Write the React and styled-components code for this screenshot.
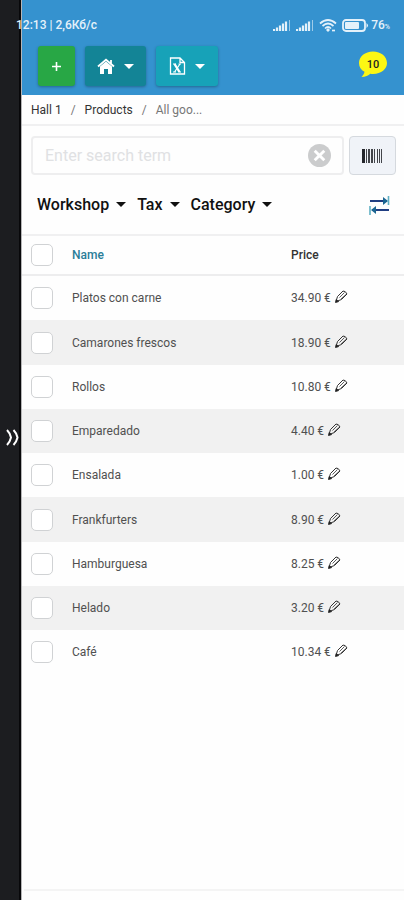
import React from "react";
import styled, { createGlobalStyle } from "styled-components";

const products = [
  { name: "Platos con carne", price: "34.90 €" },
  { name: "Camarones frescos", price: "18.90 €" },
  { name: "Rollos", price: "10.80 €" },
  { name: "Emparedado", price: "4.40 €" },
  { name: "Ensalada", price: "1.00 €" },
  { name: "Frankfurters", price: "8.90 €" },
  { name: "Hamburguesa", price: "8.25 €" },
  { name: "Helado", price: "3.20 €" },
  { name: "Café", price: "10.34 €" },
];

const GlobalStyle = createGlobalStyle`
  *, *::before, *::after { box-sizing: border-box; }
  body { margin: 0; background: #fefefe; font-family: Roboto, "Liberation Sans", sans-serif; color: #222; }
  button, input { font-family: inherit; }
  svg { display: block; flex: none; }
`;

const Page = styled.div`
  position: relative;
  display: flex;
  min-height: 100vh;
`;

const Rail = styled.aside`
  flex: 0 0 21px;
  display: flex;
  justify-content: center;
  background: #1c1d20;
  border-right: 2px solid #08080a;
`;

const RailToggle = styled.button`
  display: flex;
  align-items: center;
  justify-content: flex-end;
  width: 18px;
  height: 24px;
  margin-top: 425px;
  padding: 0;
  border: 0;
  background: none;
  color: #fff;
`;

const Main = styled.main`
  flex: 1;
  min-width: 0;
  display: flex;
  flex-direction: column;
  border-left: 1px solid #b5b5b6;
`;

const StatusBar = styled.div`
  position: absolute;
  top: 15px;
  left: 16px;
  right: 14px;
  display: flex;
  justify-content: space-between;
  align-items: center;
  height: 20px;
  font-size: 12px;
  font-weight: 500;
  color: #e4f1fa;
`;

const StatusIcons = styled.div`
  display: flex;
  align-items: center;
  gap: 5px;
`;

const Charge = styled.span`
  margin-left: -3px;
  small { font-size: 7px; }
`;

const Header = styled.header`
  display: flex;
  align-items: flex-start;
  gap: 10px;
  height: 95px;
  padding: 46px 16px 0;
  background: #3592cf;
`;

const HeaderButton = styled.button`
  display: flex;
  align-items: center;
  justify-content: center;
  gap: 9px;
  width: ${(p) => p.$width};
  height: 40px;
  padding: 0;
  border: 0;
  border-radius: 3px;
  background: ${(p) => p.$color};
  box-shadow: 0 1px 3px rgba(0, 0, 0, 0.3);
  color: #fff;
  font-size: 16px;
`;

const Messages = styled.button`
  display: grid;
  place-items: center;
  width: 30px;
  height: 30px;
  margin: 3px 0 0 auto;
  padding: 0;
  border: 0;
  background: none;
  color: #222;
  > * { grid-area: 1 / 1; }
`;

const MessageCount = styled.span`
  font-size: 11px;
  font-weight: 500;
`;

const Breadcrumbs = styled.nav`
  display: flex;
  align-items: center;
  gap: 9px;
  height: 31px;
  padding: 0 9px;
  border-bottom: 2px solid #f0f0f1;
  font-size: 12px;
  color: #777;
`;

const Crumb = styled.a`
  color: #333;
  text-decoration: none;
`;

const SearchRow = styled.form`
  display: flex;
  gap: 5px;
  padding: 10px 8px 0 9px;
`;

const SearchBox = styled.div`
  flex: 1;
  min-width: 0;
  display: flex;
  align-items: center;
  height: 39px;
  padding: 0 11px 0 12px;
  border: 2px solid #eeeeef;
  border-radius: 4px;
`;

const SearchInput = styled.input`
  flex: 1;
  min-width: 0;
  padding: 0;
  border: 0;
  outline: 0;
  background: none;
  color: #222;
  font-size: 16px;
  &::placeholder { color: #e0e1e3; opacity: 1; }
`;

const IconButton = styled.button`
  display: flex;
  align-items: center;
  justify-content: center;
  padding: 0;
  border: 0;
  background: none;
  color: inherit;
`;

const ScanButton = styled(IconButton)`
  width: 47px;
  height: 39px;
  border: 1px solid #d5d9de;
  border-radius: 4px;
  background: #f0f3f8;
`;

const Filters = styled.div`
  display: flex;
  align-items: center;
  gap: 11px;
  height: 59px;
  padding: 0 14px 0 15px;
`;

const Filter = styled.button`
  display: flex;
  align-items: center;
  gap: 7px;
  padding: 0;
  border: 0;
  background: none;
  color: #111;
  font-size: 16px;
  font-weight: 500;
`;

const Sort = styled(IconButton)`
  margin-left: auto;
`;

const Table = styled.table`
  width: 100%;
  table-layout: fixed;
  border-collapse: separate;
  border-spacing: 0;
  font-size: 12px;
`;

const CheckCol = styled.col`
  width: 50px;
`;

const PriceCol = styled.col`
  width: 113px;
`;

const HeadCell = styled.th`
  height: 42px;
  padding: 0 0 0 ${(p) => (p.$check ? "9px" : "0")};
  border-top: 2px solid #f0f0f1;
  border-bottom: 2px solid #ededee;
  text-align: left;
  font-weight: 500;
  color: ${(p) => (p.$active ? "#2a7d98" : "#333")};
`;

const Row = styled.tr`
  height: 44px;
  &:nth-child(even) { background: #f1f1f1; }
  &:nth-child(4n + 2) { height: 45px; }
`;

const Cell = styled.td`
  padding: 0 0 0 ${(p) => (p.$check ? "9px" : "0")};
  color: #505050;
`;

const Checkbox = styled.input.attrs({ type: "checkbox" })`
  appearance: none;
  display: block;
  width: 22px;
  height: 22px;
  margin: 0;
  border: 1px solid #d0d2d4;
  border-radius: 5px;
  background: #fff;
  &:checked { background: #2a7d98; }
`;

const Price = styled.div`
  display: flex;
  align-items: center;
  gap: 4px;
`;

const EditButton = styled(IconButton)`
  padding-bottom: 3px;
`;

const Footer = styled.footer`
  height: 11px;
  margin: auto 0 0 2px;
  border-top: 2px solid #f4f4f4;
`;

const Caret = () => (
  <svg width="10" height="5" viewBox="0 0 10 5" fill="currentColor" aria-hidden="true">
    <path d="M0 0h10L5 5z" />
  </svg>
);

const Plus = () => (
  <svg width="9" height="9" viewBox="0 0 9 9" stroke="currentColor" strokeWidth="1.600" aria-hidden="true">
    <path d="M4.500 0v9M0 4.500h9" />
  </svg>
);

const Signal = () => (
  <svg width="18" height="12" viewBox="0 0 18 12" stroke="currentColor" strokeWidth="2.200" aria-hidden="true">
    <path d="M1 12V10M4 12V8.500M7 12V6.500M10 12V4.500M13 12V2.500" />
    <path d="M16.500 12V1" strokeWidth="1" opacity=".6" />
  </svg>
);

const Wifi = () => (
  <svg width="18" height="14" viewBox="0 0 18 14" fill="none" stroke="currentColor" strokeWidth="1.700" aria-hidden="true">
    <path d="M1 5.500Q9-1.500 17 5.500M3.500 8Q9 3 14.500 8M6 10.500Q9 7.500 12 10.500" />
    <path d="M9 10l2 2-2 2-2-2z" fill="currentColor" stroke="none" />
    <path d="M13 12.500h3" />
  </svg>
);

const Battery = () => (
  <svg width="27" height="13" viewBox="0 0 27 13" aria-hidden="true">
    <rect x="1" y="1" width="22" height="11" rx="3" fill="none" stroke="currentColor" strokeWidth="1.800" />
    <rect x="3" y="3" width="14" height="7" rx="1" fill="currentColor" />
    <path d="M24.500 4q3 2.500 0 5z" fill="currentColor" />
  </svg>
);

const Home = () => (
  <svg width="18" height="17" viewBox="0 0 18 17" aria-hidden="true">
    <path d="M3 8.500L9 3.500l6 5V16h-4v-5H7v5H3z" fill="currentColor" />
    <path d="M1 8.500L9 1.700l8 6.800M14 2v4" fill="none" stroke="currentColor" strokeWidth="1.800" />
  </svg>
);

const Excel = () => (
  <svg width="17" height="18" viewBox="0 0 17 18" fill="none" stroke="currentColor" aria-hidden="true">
    <path d="M1.500 1h9.500l4.500 4.500V17h-14zM11 1v4.500h4.500" strokeWidth="1.300" />
    <path d="M5.500 7l5 8" strokeWidth="2.300" />
    <path d="M11 7l-5.500 8M4 7h3M9.500 7h2.500M4 15h3M9.500 15h2.500" strokeWidth="1.200" />
  </svg>
);

const Bubble = () => (
  <svg width="30" height="30" viewBox="0 0 30 30" fill="#fcf714" aria-hidden="true">
    <path d="M15 2.500C7 2.500 1 7.500 1 14c0 4 2 7 5.500 8.700-.3 2-1.500 3.600-3 5.300 4-.2 7-1.700 8.800-3.300C22 26 29 20.500 29 14 29 7.500 23 2.500 15 2.500z" />
  </svg>
);

const Clear = () => (
  <svg width="23" height="23" viewBox="0 0 24 24" aria-hidden="true">
    <circle cx="12" cy="12" r="12" fill="#cbcccd" />
    <path d="M7 7l10 10M17 7L7 17" stroke="#fff" strokeWidth="3" />
  </svg>
);

const Barcode = () => (
  <svg width="21" height="14" viewBox="0 0 21 14" fill="#24262b" aria-hidden="true">
    <path d="M0 0h3v14H0z" />
    <path d="M4 0h1v14H4zM6 0h2v14H6zM9 0h2v14H9zM12 0h1v14h-1zM15 0h1v14h-1zM17 0h1v14h-1zM19 0h1v14h-1z" opacity=".85" />
  </svg>
);

const Swap = () => (
  <svg width="21" height="20" viewBox="0 0 21 20" fill="none" aria-hidden="true">
    <path d="M1 6h17M3 15h17" stroke="#203e82" strokeWidth="2" />
    <path d="M19.500 1v9M1 11v9" stroke="#5fb0c4" strokeWidth="1.600" />
    <path d="M14 2l5 4-5 4zM7 11l-5 4 5 4z" fill="#1b6692" />
  </svg>
);

const Pencil = () => (
  <svg width="13" height="13" viewBox="0 0 13 13" fill="none" stroke="#333" aria-hidden="true">
    <path d="M1 11.500l1.500-5L8 1q2.500-.2 4 3L6.500 9.500z" strokeWidth="1" />
    <path d="M4.500 7.500l5-5M6 9L11 4.500" strokeWidth=".8" />
    <path d="M.5 12.500l.8-3.200 2.300 2.300z" fill="#111" />
  </svg>
);

const Chevrons = () => (
  <svg width="13" height="17" viewBox="0 0 13 17" fill="none" stroke="currentColor" strokeWidth="2" aria-hidden="true">
    <path d="M1 1q3 3 4 7.500Q4 13 1 16M7.500 1q3 3 4 7.500-1 4.500-4 7.500" />
  </svg>
);

export default function App() {
  return (
    <>
      <GlobalStyle />
      <Page>
        <Rail>
          <RailToggle type="button" aria-label="Open menu"><Chevrons /></RailToggle>
        </Rail>
        <Main>
          <Header>
            <HeaderButton type="button" $width="37px" $color="#28a745" aria-label="Add product"><Plus /></HeaderButton>
            <HeaderButton type="button" $width="61px" $color="#138496" aria-label="Home"><Home /><Caret /></HeaderButton>
            <HeaderButton type="button" $width="62px" $color="#17a2b8" aria-label="Spreadsheet"><Excel /><Caret /></HeaderButton>
            <Messages type="button" aria-label="Messages"><Bubble /><MessageCount>10</MessageCount></Messages>
          </Header>
          <Breadcrumbs aria-label="Breadcrumb">
            <Crumb href="#hall">Hall 1</Crumb>
            <span>/</span>
            <Crumb href="#products">Products</Crumb>
            <span>/</span>
            <span>All goo...</span>
          </Breadcrumbs>
          <SearchRow onSubmit={(e) => e.preventDefault()}>
            <SearchBox>
              <SearchInput type="text" placeholder="Enter search term" aria-label="Search" />
              <IconButton type="reset" aria-label="Clear"><Clear /></IconButton>
            </SearchBox>
            <ScanButton type="button" aria-label="Scan barcode"><Barcode /></ScanButton>
          </SearchRow>
          <Filters>
            {["Workshop", "Tax", "Category"].map((label) => (
              <Filter type="button" key={label}>{label}<Caret /></Filter>
            ))}
            <Sort type="button" aria-label="Change order"><Swap /></Sort>
          </Filters>
          <Table>
            <colgroup><CheckCol /><col /><PriceCol /></colgroup>
            <thead>
              <tr>
                <HeadCell $check><Checkbox aria-label="Select all" /></HeadCell>
                <HeadCell $active>Name</HeadCell>
                <HeadCell>Price</HeadCell>
              </tr>
            </thead>
            <tbody>
              {products.map(({ name, price }) => (
                <Row key={name}>
                  <Cell $check><Checkbox aria-label={name} /></Cell>
                  <Cell>{name}</Cell>
                  <Cell>
                    <Price>{price}<EditButton type="button" aria-label={`Edit price of ${name}`}><Pencil /></EditButton></Price>
                  </Cell>
                </Row>
              ))}
            </tbody>
          </Table>
          <Footer />
        </Main>
        <StatusBar>
          <span>12:13 | 2,6Кб/с</span>
          <StatusIcons>
            <Signal /><Signal /><Wifi /><Battery />
            <Charge>76<small>%</small></Charge>
          </StatusIcons>
        </StatusBar>
      </Page>
    </>
  );
}
